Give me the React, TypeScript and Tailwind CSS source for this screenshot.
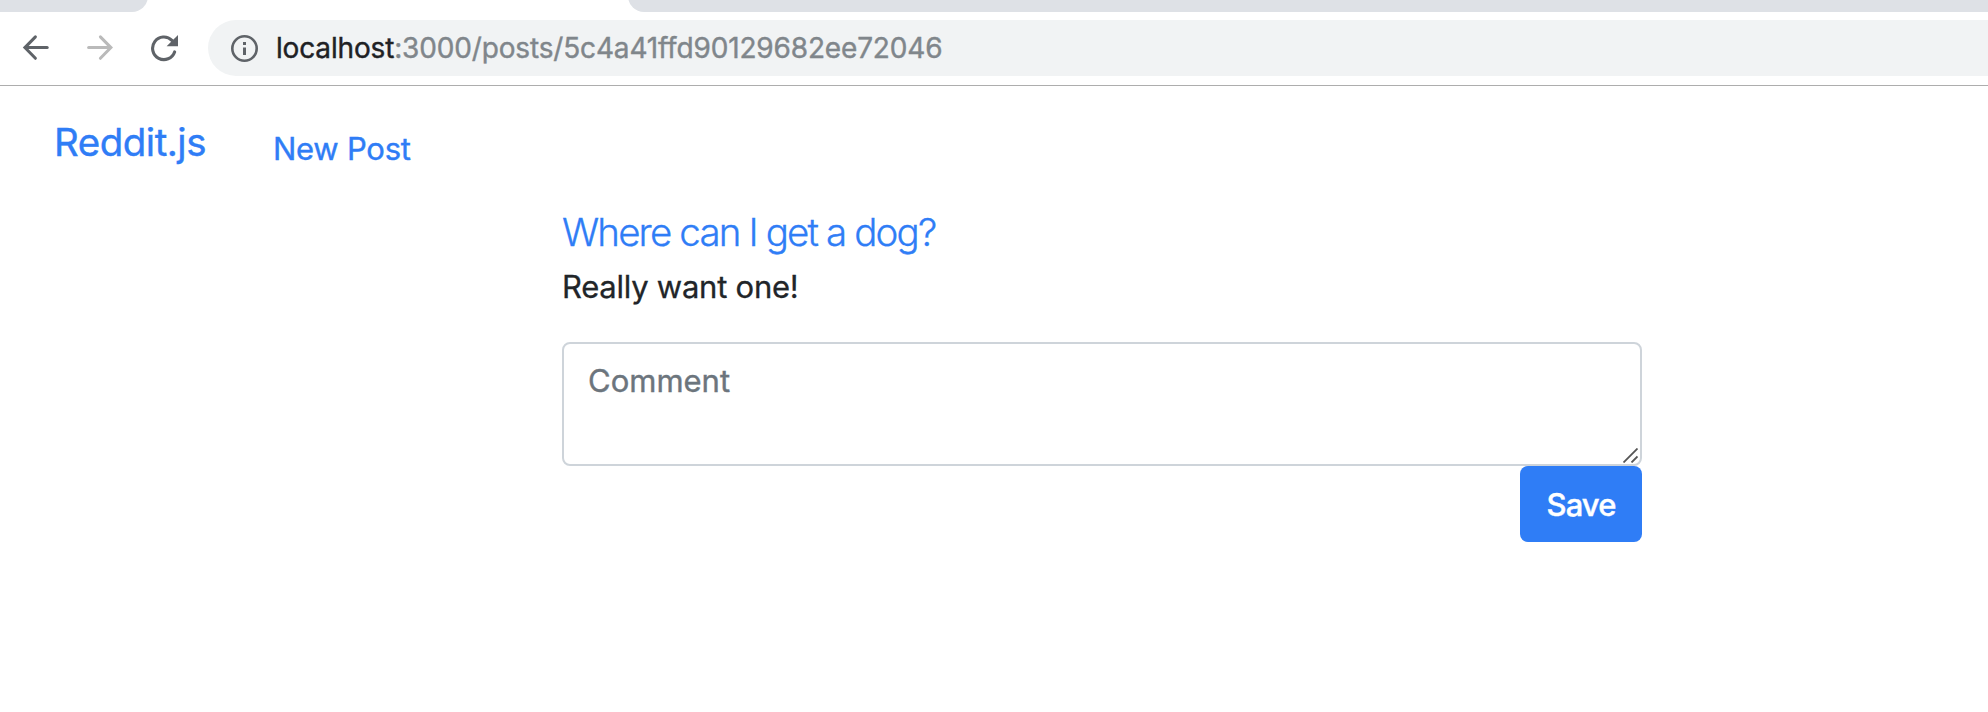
function BackIcon() {
  return (
    <svg width="28" height="28" viewBox="0 0 28 28" fill="none" stroke="#5f6368" strokeWidth="3" strokeLinecap="round" strokeLinejoin="miter">
      <path d="M25.2 13.6H4" />
      <path d="M13.4 2.9 2.9 13.6l10.5 10.7" />
    </svg>
  );
}

function ForwardIcon() {
  return (
    <svg width="28" height="28" viewBox="0 0 28 28" fill="none" stroke="#bababa" strokeWidth="3" strokeLinecap="round" strokeLinejoin="miter">
      <path d="M2.6 13.6H24" />
      <path d="M14.4 2.9 24.9 13.6 14.4 24.3" />
    </svg>
  );
}

function ReloadIcon() {
  return (
    <svg width="28" height="28" viewBox="0 0 28 28" fill="none">
      <path d="M24.6 17.9A11.3 11.3 0 1 1 21.9 6.3" stroke="#5f6368" strokeWidth="3.1" strokeLinecap="round" />
      <path d="M28 1v11.2H16.6z" fill="#5f6368" />
    </svg>
  );
}

function InfoIcon() {
  return (
    <svg width="28" height="28" viewBox="0 0 28 28" fill="none">
      <circle cx="14.5" cy="14.5" r="12.2" stroke="#5f6368" strokeWidth="2.6" />
      <path d="M13 13.5h3V21h-3zM13 8h3v3h-3z" fill="#5f6368" />
    </svg>
  );
}

function TabStrip() {
  return (
    <div className="flex h-3 items-end justify-between overflow-hidden">
      <div className="h-4 w-[148px] shrink-0 rounded-br-2xl bg-[#dee1e6]" />
      <div className="h-4 w-[1360px] shrink-0 rounded-bl-2xl bg-[#dee1e6]" />
    </div>
  );
}

function Toolbar() {
  return (
    <div className="flex h-[74px] items-start border-b border-[#adadad] pt-2">
      <div className="flex h-14 w-[208px] shrink-0 items-center gap-9 pl-[22px]">
        <BackIcon />
        <ForwardIcon />
        <ReloadIcon />
      </div>
      <div className="flex h-14 flex-1 items-center rounded-l-full bg-[#f1f3f4] pl-[22px]">
        <InfoIcon />
        <div className="ml-[18px] text-[28px] leading-[56px] tracking-[-0.16px] whitespace-nowrap text-[#80868b] [-webkit-text-stroke:0.4px]">
          <span className="text-[#202124]">localhost</span>:3000/posts/5c4a41ffd90129682ee72046
        </div>
      </div>
    </div>
  );
}

export default function App() {
  return (
    <div className="h-[712px] w-full overflow-hidden bg-white font-[Inter,'Liberation_Sans',sans-serif] text-[#212529]">
      <TabStrip />
      <Toolbar />
      <nav className="flex items-start pt-[26px] text-[#2f7df6] [-webkit-text-stroke:0.4px]">
        <a className="w-[219px] pl-[54px] text-[38.5px] leading-[60px] tracking-[-0.5px]">Reddit.js</a>
        <a className="mt-[13px] pl-[54px] text-[31px] leading-[48px] tracking-[-0.25px]">New Post</a>
      </nav>
      <main className="ml-[562px] w-[1080px] pt-[35px]">
        <h1 className="text-[38.5px] leading-[48px] font-light tracking-[-1.86px] text-[#2f7df6] [-webkit-text-stroke:0.3px]">Where can I get a dog?</h1>
        <p className="mt-[7px] text-[31px] leading-[48px] tracking-[-0.25px] [-webkit-text-stroke:0.3px]">Really want one!</p>
        <form className="mt-[31px] flex flex-col items-end">
          <div className="relative h-[124px] w-full">
            <textarea
              placeholder="Comment"
              className="block h-full w-full resize-none overflow-hidden rounded-lg border-2 border-[#ced4da] px-6 py-[13px] text-[31px] leading-[48px] [-webkit-text-stroke:0.4px] placeholder:text-[#6c757d] placeholder:opacity-100"
            />
            <svg className="absolute right-1 bottom-[3px]" width="15" height="15" viewBox="0 0 15 15" fill="none" stroke="#555" strokeWidth="1.8">
              <path d="M.5 14.5 14.5.5M8.5 14.5l6-6" />
            </svg>
          </div>
          <button type="button" className="h-[76px] w-[122px] rounded-lg bg-[#2f7df6] text-[31px] leading-[77px] font-medium tracking-[-0.9px] text-white [-webkit-text-stroke:0.4px]">
            Save
          </button>
        </form>
      </main>
    </div>
  );
}
